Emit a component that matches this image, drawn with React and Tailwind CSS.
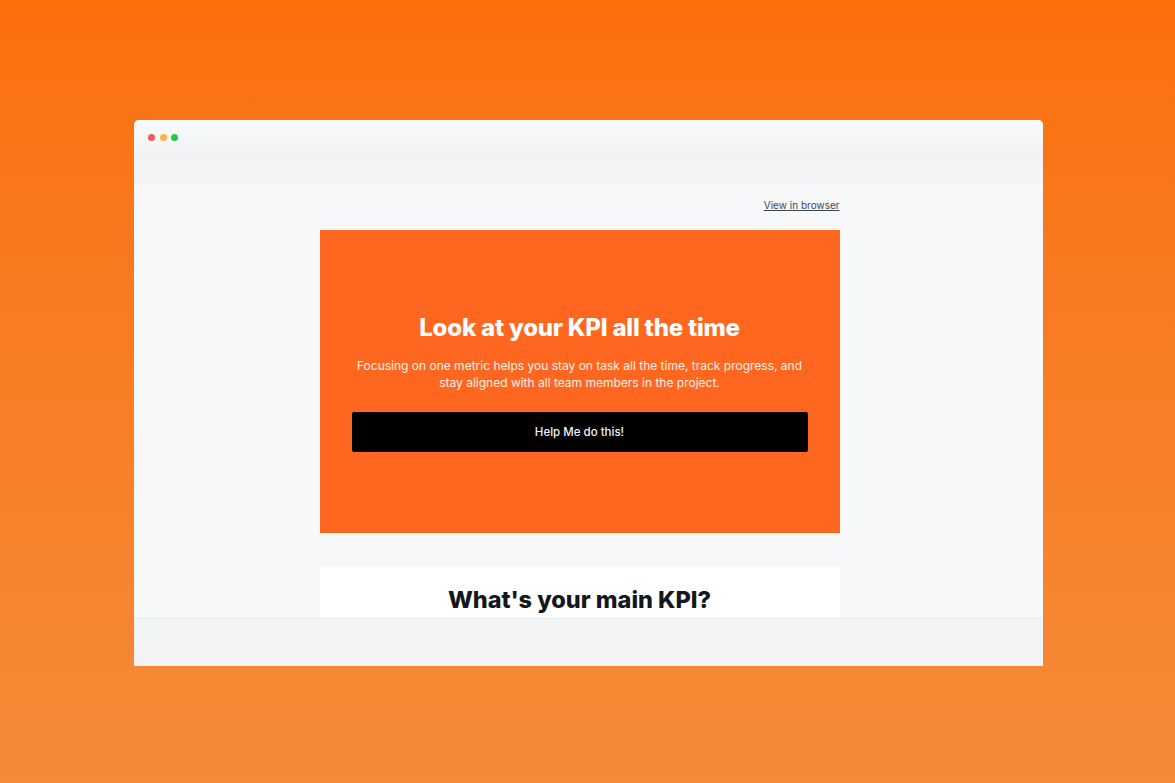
const FONT = "font-['Inter','Noto_Sans',sans-serif]";

const Dot = ({ color }) => <span className={`w-[7px] h-[7px] rounded-full ${color}`} />;

const TitleBar = () => (
  <div className="h-[35px] shrink-0 flex items-center gap-[4.5px] pl-[14.5px] bg-gradient-to-b from-[#f9fafb] to-[#f2f3f4] border-b border-[#eff0f1]">
    <Dot color="bg-[#f25c5f]" />
    <Dot color="bg-[#fbb33e]" />
    <Dot color="bg-[#2cc840]" />
  </div>
);

const EmailBody = () => (
  <div className="h-[435px] shrink-0 bg-[#f7f8fa] overflow-hidden flex flex-col items-center pr-[17px]">
    <div className="w-[520px] pt-[15px] h-[47px] shrink-0 flex justify-end">
      <a href="#" className="text-[10px] leading-[14px] text-[#3f4650] underline h-[14px]">
        View in browser
      </a>
    </div>
    <div className="w-[520px] h-[303px] shrink-0 bg-[#ff6720] flex flex-col items-center pt-[83px] px-8">
      <h1 className="text-[24px] leading-[30px] font-extrabold tracking-[-0.2px] text-white">
        Look at your KPI all the time
      </h1>
      <p className="mt-[14px] text-[12px] leading-[17px] text-center text-[#fff1e8]">
        Focusing on one metric helps you stay on task all the time, track progress, and
        <br />
        stay aligned with all team members in the project.
      </p>
      <button
        type="button"
        className="mt-[21px] w-full h-10 shrink-0 pt-[2px] bg-black rounded-[2px] text-[11.5px] font-medium text-[#f3f4f6]"
      >
        Help Me do this!
      </button>
    </div>
    <div className="w-[520px] mt-[34px] shrink-0 h-[80px] bg-white pt-[16px] text-center">
      <h2 className="text-[23.5px] leading-[33px] font-extrabold text-[#14171c]">What's your main KPI?</h2>
    </div>
  </div>
);

export default function App() {
  return (
    <div className={`w-full h-[783px] overflow-hidden bg-gradient-to-b from-[#fb6f08] to-[#f48b37] pt-[120px] flex justify-center ${FONT}`}>
      <div className="w-[909px] h-[546px] ml-[1px] flex flex-col rounded-t-[5px] overflow-hidden bg-[#f2f3f5]">
        <TitleBar />
        <div className="h-[28px] shrink-0 bg-[#f2f3f5]" />
        <EmailBody />
        <div className="flex-1 border-t border-[#e9ebee] bg-[#f2f3f5]" />
      </div>
    </div>
  );
}
